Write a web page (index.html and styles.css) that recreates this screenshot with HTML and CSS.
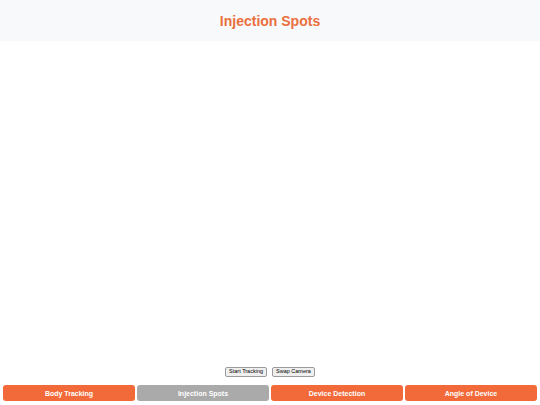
FILE: index.html
```html
<!DOCTYPE html>
<html>
<head>
<meta charset="utf-8">
<link rel="stylesheet" href="styles.css">
</head>
<body>
<div class="app">
  <header class="header"><h1 class="title">Injection Spots</h1></header>
  <main class="view"></main>
  <div class="controls">
    <button class="ctl">Start Tracking</button>
    <button class="ctl">Swap Camera</button>
  </div>
  <nav class="tabs">
    <button class="tab">Body Tracking</button>
    <button class="tab active">Injection Spots</button>
    <button class="tab">Device Detection</button>
    <button class="tab">Angle of Device</button>
  </nav>
</div>
</body>
</html>
```
FILE: styles.css
```css
html, body { margin: 0; padding: 0; background: #fff; }
body { font-family: "Liberation Sans", Arial, sans-serif; }
.app { display: flex; flex-direction: column; height: 405px; }
.header { height: 41px; background: #f8f9fa; display: flex; align-items: center; justify-content: center; }
.title { margin: 0; font-size: 14px; font-weight: bold; color: #ea6f3d; }
.view { flex: 1; }
.controls { display: flex; justify-content: center; gap: 5px; }
.ctl { font-family: "Liberation Sans", Arial, sans-serif; font-size: 5.5px; height: 10px; padding: 0 3px; background: #efefef; border: 1px solid #9a9a9a; border-radius: 2px; color: #000; line-height: 1; }
.tabs { display: flex; gap: 2px; padding: 8px 3px 4px; }
.tab { flex: 1; height: 16px; border: none; border-radius: 3px; background: #f26a39; color: #fff; font-family: "Liberation Sans", Arial, sans-serif; font-size: 7px; font-weight: bold; padding: 0; }
.tab.active { background: #aaaaaa; }
```
